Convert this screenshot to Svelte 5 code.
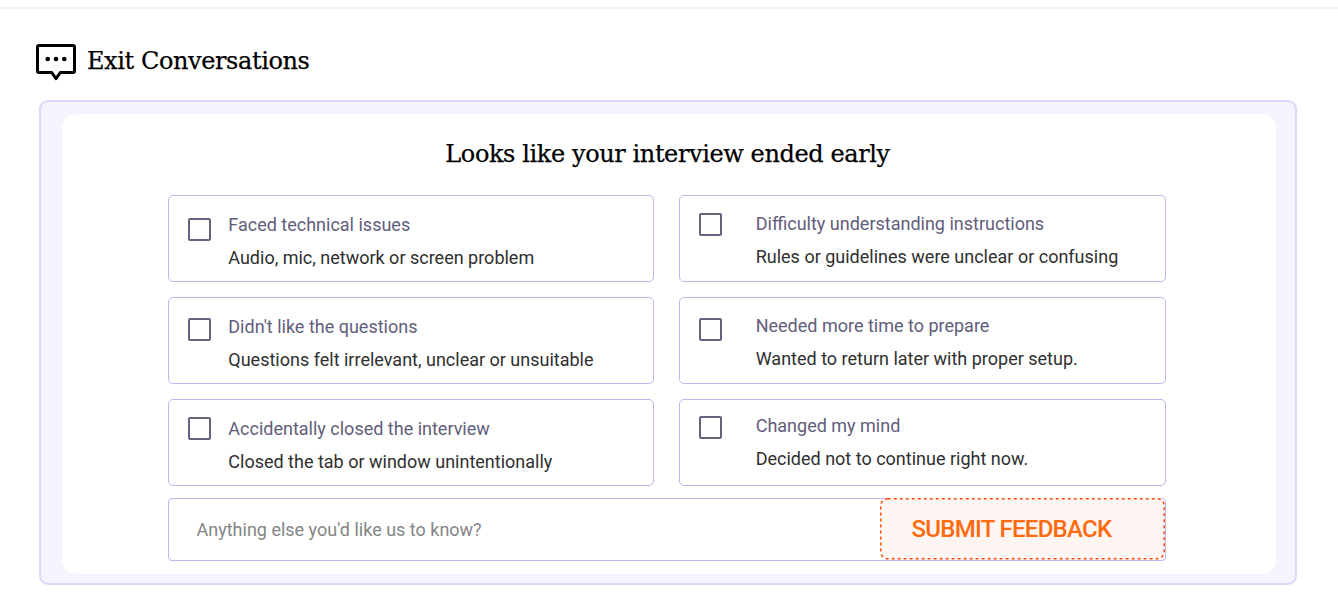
<script>
	const reasons = $state([
		{
			id: 'technical',
			title: 'Faced technical issues',
			detail: 'Audio, mic, network or screen problem',
			boxTop: 22,
			textTop: 12,
			checked: false,
		},
		{
			id: 'instructions',
			title: 'Difficulty understanding instructions',
			detail: 'Rules or guidelines were unclear or confusing',
			boxTop: 17,
			textTop: 11,
			wide: true,
			checked: false,
		},
		{
			id: 'questions',
			title: "Didn't like the questions",
			detail: 'Questions felt irrelevant, unclear or unsuitable',
			boxTop: 20,
			textTop: 12,
			checked: false,
		},
		{
			id: 'time',
			title: 'Needed more time to prepare',
			detail: 'Wanted to return later with proper setup.',
			boxTop: 20,
			textTop: 11,
			wide: true,
			checked: false,
		},
		{
			id: 'accident',
			title: 'Accidentally closed the interview',
			detail: 'Closed the tab or window unintentionally',
			boxTop: 17,
			textTop: 12,
			checked: false,
		},
		{
			id: 'mind',
			title: 'Changed my mind',
			detail: 'Decided not to continue right now.',
			boxTop: 16,
			textTop: 9,
			wide: true,
			checked: false,
		},
	]);

	let comment = $state('');

	function submit(event) {
		event.preventDefault();
	}
</script>

<main>
	<div class="divider"></div>

	<header>
		<svg width="40" height="37" viewBox="0 0 40 37" fill="none">
			<path
				d="M3 1.5h34q1.5 0 1.5 1.5v24q0 1.5-1.5 1.5H24.3L20 34.7l-4.3-6.2H3Q1.5 28.5 1.5 27V3Q1.5 1.5 3 1.5Z"
				stroke="#000"
				stroke-width="3"
				stroke-linejoin="round"
			/>
			<circle cx="11.7" cy="15" r="2.3" fill="#000" />
			<circle cx="20" cy="15" r="2.3" fill="#000" />
			<circle cx="28.3" cy="15" r="2.3" fill="#000" />
		</svg>
		<h1>Exit Conversations</h1>
	</header>

	<section class="panel">
		<form class="sheet" onsubmit={submit}>
			<h2>Looks like your interview ended early</h2>

			<div class="reasons">
				{#each reasons as reason (reason.id)}
					<label class="reason" class:wide={reason.wide}>
						<input
							type="checkbox"
							bind:checked={reason.checked}
							style="margin-top: {reason.boxTop}px"
						/>
						<span class="text" style="margin-top: {reason.textTop}px">
							<span class="title">{reason.title}</span>
							<span class="detail">{reason.detail}</span>
						</span>
					</label>
				{/each}
			</div>

			<div class="comment">
				<input
					type="text"
					placeholder="Anything else you'd like us to know?"
					bind:value={comment}
				/>
				<button type="submit">
					<svg class="outline" width="285" height="62">
						<rect x="0.75" y="0.75" width="283.5" height="60" rx="7" />
					</svg>
					<span>SUBMIT FEEDBACK</span>
				</button>
			</div>
		</form>
	</section>
</main>

<style>
	:global(body) {
		background: #fff;
	}

	main {
		box-sizing: border-box;
		height: 612px;
		padding-top: 7px;
		overflow: hidden;
		font-family: Roboto, 'Liberation Sans', sans-serif;
	}

	.divider {
		height: 2px;
		background: #f3f3f3;
	}

	header {
		display: flex;
		align-items: center;
		gap: 11px;
		height: 36px;
		margin: 35px 36px 0;
	}

	header svg {
		flex: none;
	}

	h1,
	h2 {
		margin: 0;
		font-family: 'DejaVu Serif', serif;
		font-weight: 400;
		font-size: 24px;
		line-height: 32px;
		letter-spacing: -0.4px;
		color: #000;
		-webkit-text-stroke: 0.25px #000;
		white-space: nowrap;
	}

	h1 {
		margin-top: -2px;
	}

	.panel {
		box-sizing: border-box;
		width: 1258px;
		height: 485px;
		margin: 20px 0 0 39px;
		padding: 12px 19px 9px 21px;
		border: 2px solid #dfd7f7;
		border-radius: 9px;
		background: #f6f3fe;
	}

	.sheet {
		box-sizing: border-box;
		height: 460px;
		padding: 24px 110px 0 106px;
		border-radius: 14px;
		background: #fff;
	}

	h2 {
		padding-left: 1px;
		text-align: center;
	}

	.reasons {
		display: grid;
		grid-template-columns: 486px 487px;
		gap: 15px 25px;
		margin-top: 25px;
	}

	.reason {
		display: flex;
		align-items: flex-start;
		gap: 17.3px;
		box-sizing: border-box;
		height: 87px;
		padding-left: 19px;
		border: 1px solid #c3b3ef;
		border-radius: 5px;
	}

	.reason.wide {
		gap: 33.3px;
		padding-left: 19.4px;
	}

	.reason input {
		appearance: none;
		flex: none;
		box-sizing: border-box;
		width: 23px;
		height: 23px;
		margin: 0;
		border: 2px solid #66617f;
		border-radius: 2px;
	}

	.reason input:checked {
		background: #66617f;
	}

	.text {
		display: flex;
		flex-direction: column;
		font-size: 18px;
		line-height: 33px;
		white-space: nowrap;
	}

	.title {
		color: #625d7b;
	}

	.detail {
		color: #2f2f2f;
	}

	.comment {
		display: flex;
		box-sizing: border-box;
		width: 998px;
		height: 63px;
		margin-top: 12px;
		border: 1px solid #c3b3ef;
		border-radius: 4px;
	}

	.comment input {
		flex: 1;
		min-width: 0;
		padding: 0 0 0 27.5px;
		border: 0;
		outline: 0;
		background: none;
		font: inherit;
		font-size: 18px;
	}

	.comment input::placeholder {
		color: #858585;
		opacity: 1;
	}

	button {
		position: relative;
		flex: none;
		width: 285px;
		height: 61px;
		margin-top: -1px;
		padding: 0 22px 0 0;
		border: 0;
		border-radius: 8px;
		background: #fff5f2;
		color: #ff6a0d;
		font: 500 24px/60px Roboto, sans-serif;
		letter-spacing: -0.7px;
		white-space: nowrap;
	}

	.outline {
		position: absolute;
		top: 0;
		left: 0;
		fill: none;
		stroke: #ff4d0d;
		stroke-width: 1.5;
		stroke-dasharray: 3 3;
	}
</style>
